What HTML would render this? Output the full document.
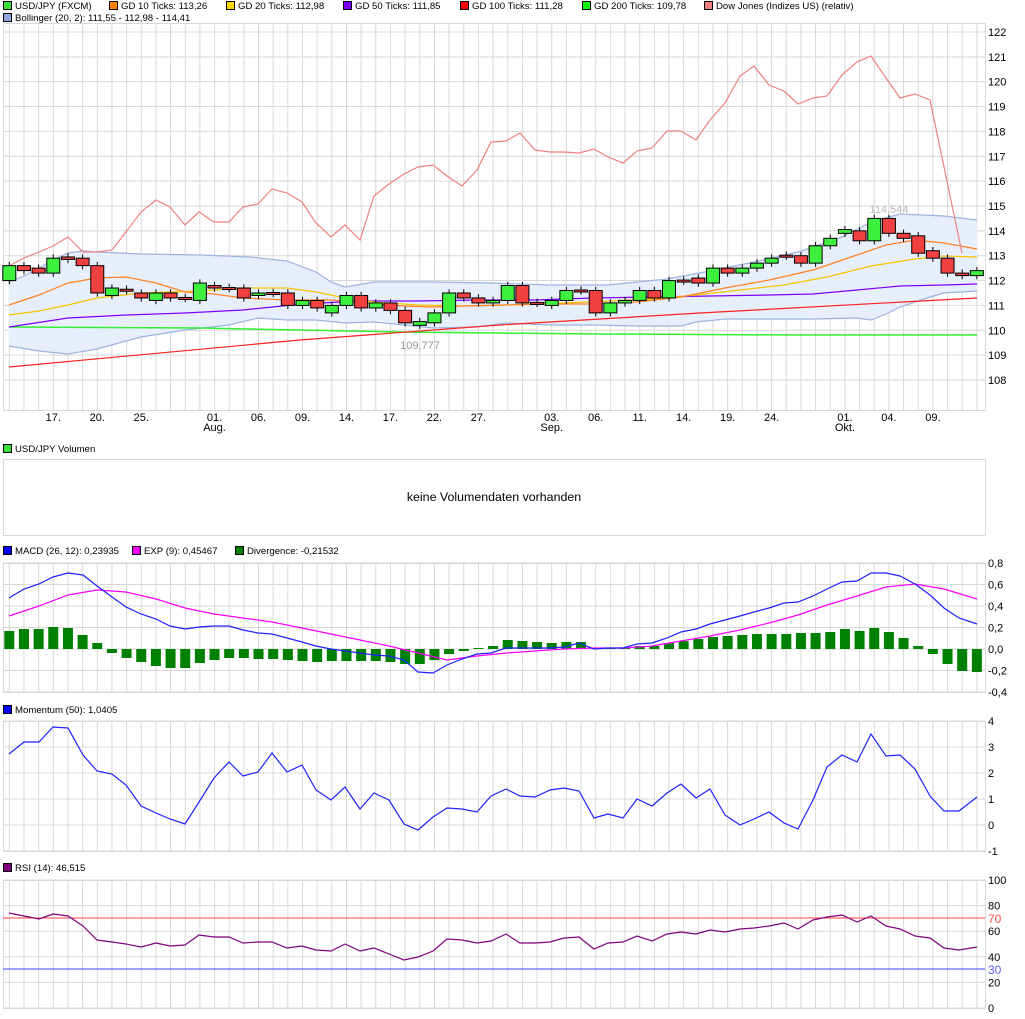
<!DOCTYPE html>
<html><head><meta charset="utf-8"><style>
body{margin:0;background:#fff;width:1025px;height:1019px;overflow:hidden;font-family:"Liberation Sans",sans-serif;}
svg{display:block}
text{font-family:"Liberation Sans",sans-serif;font-size:11px;fill:#000}
text.lg{font-size:9.6px}
</style></head><body>
<svg id="s" width="1025" height="1019" xmlns="http://www.w3.org/2000/svg"></svg>
<script>
const S=document.getElementById('s');let h='';
const X=i=>9.3+14.66*i;const L=3,R=985;
function grid(t,b){for(let i=0;i<67;i++)h+=`<line x1="${X(i)}" y1="${t}" x2="${X(i)}" y2="${b}" stroke="#d8d8d8"/>`;
h+=`<rect x="${L}.5" y="${t}.5" width="${R-L}" height="${b-t}" fill="none" stroke="#d8d8d8"/>`;}
function hl(y,lab,col){h+=`<line x1="${L}" y1="${y}" x2="${R}" y2="${y}" stroke="#d8d8d8"/>`;if(lab!==undefined)h+=`<text x="988" y="${y+4}" ${col?'style="fill:'+col+';font-size:12px"':''}>${lab}</text>`;}
function pl(pts,c,w){h+=`<polyline points="${pts.map(p=>p.join(',')).join(' ')}" fill="none" stroke="${c}" stroke-width="${w||1.2}"/>`;}
function leg(x,y,c,t){h+=`<rect x="${x}.5" y="${y-8}.5" width="8" height="8" fill="${c}" stroke="#000"/><text class="lg" x="${x+12}" y="${y}">${t}</text>`;}
leg(3,9,'#3be03b','USD/JPY (FXCM)');leg(109,9,'#ff7f00','GD 10 Ticks: 113,26');leg(226,9,'#ffd700','GD 20 Ticks: 112,98');leg(343,9,'#7f00ff','GD 50 Ticks: 111,85');leg(460,9,'#ff0000','GD 100 Ticks: 111,28');leg(582,9,'#00ff00','GD 200 Ticks: 109,78');leg(704,9,'#f08080','Dow Jones (Indizes US) (relativ)');
leg(3,21,'#8fa8d8','Bollinger (20, 2): 111,55 - 112,98 - 114,41');
const PY=p=>380-(p-108)*24.86;
grid(23,410);for(let p=108;p<=122;p++)hl(PY(p),p);
const dl=[[3,'17.'],[6,'20.'],[9,'25.'],[14,'01.','Aug.'],[17,'06.'],[20,'09.'],[23,'14.'],[26,'17.'],[29,'22.'],[32,'27.'],[37,'03.','Sep.'],[40,'06.'],[43,'11.'],[46,'14.'],[49,'19.'],[52,'24.'],[57,'01.','Okt.'],[60,'04.'],[63,'09.']];
dl.forEach(d=>{h+=`<text x="${X(d[0])}" y="421" text-anchor="middle">${d[1]}</text>`;if(d[2])h+=`<text x="${X(d[0])}" y="431" text-anchor="middle">${d[2]}</text>`;});
const bu=[[9,282],[24,276],[39,268],[53,260],[68,253],[83,251],[97,252],[141,254],[200,255],[250,257],[287,261],[316,272],[331,282],[345,287],[374,282],[433,282],[491,283],[550,285],[608,285],[667,279],[710,271],[754,262],[798,252],[842,237],[871,222],[900,214],[944,216],[977,220]];
const bl=[[9,346],[39,351],[68,354],[97,349],[141,337],[185,330],[229,325],[258,318],[287,320],[316,320],[345,323],[374,322],[404,325],[433,328],[477,327],[506,323],[550,325],[594,325],[637,326],[681,326],[696,322],[725,319],[769,319],[813,319],[857,318],[871,320],[886,314],[900,307],[930,297],[944,293],[977,291]];
h+=`<polygon points="${bu.concat(bl.slice().reverse()).map(p=>p.join(',')).join(' ')}" fill="#e8effc"/>`;
pl(bu,'#9db3e0');pl(bl,'#9db3e0');
pl([[9,327],[200,328],[400,332],[600,334],[800,335],[977,335]],'#33ee33',1.5);
pl([[9,367],[300,340],[500,325],[700,313],[977,298]],'#ff2020');
pl([[9,327],[68,318],[126,315],[185,313],[243,310],[302,304],[360,301],[418,301],[477,300],[535,300],[594,298],[652,297],[710,296],[769,295],[813,294],[857,290],[900,286],[944,285],[977,284]],'#7f00ff');
pl([[9,315],[39,311],[68,305],[97,298],[141,293],[200,291],[243,288],[287,288],[316,292],[345,298],[374,302],[418,305],[462,306],[506,305],[564,303],[608,301],[652,299],[696,295],[740,290],[784,285],[827,277],[871,266],[915,259],[944,256],[977,257]],'#f5c400');
pl([[9,305],[39,295],[68,283],[97,278],[126,277],[156,283],[185,292],[214,294],[243,298],[287,300],[331,300],[374,304],[404,306],[433,307],[462,306],[506,305],[550,304],[594,304],[637,302],[681,297],[725,288],[769,280],[813,270],[857,255],[886,245],[915,240],[944,243],[977,249]],'#ff8020');
pl([[9,266],[24,258],[39,252],[53,246],[68,237],[83,252],[97,252],[112,250],[126,232],[141,212],[156,200],[170,207],[185,225],[199,212],[214,222],[229,222],[243,207],[258,204],[272,189],[287,193],[302,202],[316,223],[331,237],[345,225],[360,240],[374,196],[389,184],[404,174],[418,167],[433,165],[447,176],[462,186],[477,170],[491,142],[506,141],[520,133],[535,150],[550,152],[564,152],[579,153],[594,149],[608,157],[623,163],[637,151],[652,148],[667,131],[681,131],[696,140],[710,120],[725,103],[740,76],[754,66],[769,85],[784,91],[798,104],[813,98],[827,96],[842,75],[857,62],[871,56],[886,78],[900,98],[915,94],[930,100],[962,253]],'#f08080');
const c=[[112,112.6],[112.6,112.4],[112.5,112.3],[112.3,112.9],[112.95,112.85],[112.9,112.6],[112.6,111.5],[111.4,111.7],[111.65,111.6],[111.5,111.3],[111.2,111.5],[111.5,111.3],[111.32,111.28],[111.2,111.9],[111.8,111.7],[111.72,111.68],[111.7,111.3],[111.4,111.5],[111.52,111.48],[111.5,111.0],[111.0,111.2],[111.2,110.9],[110.7,111.0],[111.0,111.4],[111.4,110.9],[110.9,111.1],[111.1,110.8],[110.8,110.3],[110.2,110.35],[110.3,110.7],[110.7,111.5],[111.5,111.3],[111.3,111.1],[111.1,111.2],[111.2,111.8],[111.8,111.1],[111.12,111.08],[111.0,111.2],[111.2,111.6],[111.62,111.58],[111.6,110.7],[110.7,111.1],[111.1,111.2],[111.2,111.6],[111.6,111.3],[111.3,112.0],[112.02,111.98],[112.1,111.9],[111.9,112.5],[112.5,112.3],[112.3,112.5],[112.5,112.7],[112.7,112.9],[113.02,112.98],[113.0,112.7],[112.7,113.4],[113.4,113.7],[113.9,114.05],[114.0,113.6],[113.6,114.5],[114.5,113.9],[113.9,113.7],[113.8,113.1],[113.2,112.9],[112.9,112.3],[112.3,112.2],[112.2,112.4]];
c.forEach((d,i)=>{const x=X(i),o=d[0],cl=d[1],hi=Math.max(o,cl)+0.15,lo=Math.min(o,cl)-0.15;
h+=`<line x1="${x}" y1="${PY(hi)}" x2="${x}" y2="${PY(lo)}" stroke="#000"/>`;
const t=PY(Math.max(o,cl)),b=PY(Math.min(o,cl));const ht=Math.max(b-t,2);
h+=`<rect x="${x-6.5}" y="${t}" width="13" height="${ht}" fill="${cl>=o?'#3ef03e':'#f04040'}" stroke="#000"/>`;});
h+=`<text x="420" y="349" text-anchor="middle" style="fill:#999">109,777</text><text x="889" y="213" text-anchor="middle" style="fill:#bbb">114,544</text>`;
leg(3,452,'#3be03b','USD/JPY Volumen');
h+=`<rect x="${L}.5" y="459.5" width="${R-L}" height="76" fill="none" stroke="#d8d8d8"/><text x="494" y="501" text-anchor="middle" style="font-size:12.4px">keine Volumendaten vorhanden</text>`;
leg(3,554,'#0000ff','MACD (26, 12): 0,23935');leg(132,554,'#ff00ff','EXP (9): 0,45467');leg(235,554,'#007f00','Divergence: -0,21532');
grid(563,692);const mv=['0,8','0,6','0,4','0,2','0,0','-0,2','-0,4'];mv.forEach((v,k)=>hl(563+k*21.5,v));
const dv=[18,20,20,22,21,14,6,-4,-9,-13,-17,-19,-19,-14,-11,-9,-9,-10,-10,-11,-12,-13,-12,-12,-12,-12,-13,-15,-15,-11,-5,-2,1,3,9,8,7,6,7,7,1,1,1,3,3,6,8,10,12,13,14,15,15,15,16,16,17,20,18,21,17,11,3,-5,-15,-22,-23];
dv.forEach((v,i)=>{h+=`<rect x="${X(i)-5}" y="${v>0?649-v:649}" width="10" height="${Math.abs(v)}" fill="#008000"/>`;});
pl([[9,616],[39,606],[68,595],[97,590],[126,592],[156,599],[185,608],[214,614],[243,618],[272,622],[302,628],[331,634],[360,640],[389,646],[418,653],[447,660],[477,656],[506,653],[535,651],[564,649],[594,648],[623,648],[652,646],[681,641],[710,636],[740,630],[769,623],[798,615],[827,605],[857,596],[886,587],[915,584],[944,589],[977,599]],'#ff00ff');
pl([[9,598],[24,589],[39,584],[53,577],[68,573],[83,575],[97,586],[112,597],[126,607],[141,614],[156,619],[170,626],[185,629],[199,627],[214,626],[229,626],[243,630],[258,633],[272,634],[287,638],[302,642],[316,646],[331,649],[345,651],[360,653],[374,655],[389,656],[404,660],[418,672],[433,673],[447,665],[462,659],[477,654],[491,653],[506,648],[520,648],[535,648],[550,648],[564,647],[579,643],[594,649],[608,648],[623,648],[637,644],[652,643],[667,638],[681,632],[696,629],[710,624],[725,620],[740,616],[754,612],[769,608],[784,603],[798,602],[813,596],[827,589],[842,582],[857,581],[871,573],[886,573],[900,576],[915,584],[930,595],[944,608],[959,618],[977,624]],'#2020ff');
leg(3,713,'#0000ff','Momentum (50): 1,0405');
grid(721,851);[4,3,2,1,0,-1].forEach((v,k)=>hl(721+k*26,v));
pl([[9,754],[24,742],[39,742],[53,727],[68,728],[83,755],[97,771],[112,774],[126,785],[141,806],[156,813],[170,819],[185,824],[199,802],[214,778],[229,762],[243,776],[258,772],[272,753],[287,772],[302,765],[316,790],[331,800],[345,787],[360,809],[374,793],[389,800],[404,824],[418,830],[433,817],[447,808],[462,809],[477,812],[491,796],[506,789],[520,796],[535,797],[550,790],[564,788],[579,791],[594,818],[608,814],[623,818],[637,799],[652,806],[667,793],[681,784],[696,798],[710,789],[725,815],[740,825],[754,819],[769,812],[784,823],[798,829],[813,800],[827,767],[842,755],[857,762],[871,734],[886,756],[900,755],[915,769],[930,796],[944,811],[959,811],[977,797]],'#2020ff');
leg(3,871,'#800080','RSI (14): 46,515');
grid(880,1008);[100,80,60,40,20,0].forEach((v,k)=>hl(880+k*25.6,v));
h+=`<line x1="${L}" y1="918" x2="${R}" y2="918" stroke="#ff4040"/><line x1="${L}" y1="969" x2="${R}" y2="969" stroke="#4040ff"/>`;
h+=`<text x="988" y="923" style="fill:#ff5050;font-size:12px">70</text><text x="988" y="974" style="fill:#6060ff;font-size:12px">30</text>`;
pl([[9,913],[24,916],[39,919],[53,914],[68,916],[83,926],[97,940],[112,942],[126,944],[141,947],[156,943],[170,946],[185,945],[199,935],[214,937],[229,937],[243,943],[258,942],[272,942],[287,948],[302,946],[316,950],[331,951],[345,944],[360,951],[374,948],[389,954],[404,960],[418,957],[433,951],[447,939],[462,940],[477,943],[491,941],[506,934],[520,943],[535,943],[550,942],[564,938],[579,937],[594,949],[608,943],[623,942],[637,936],[652,941],[667,934],[681,932],[696,934],[710,930],[725,932],[740,929],[754,928],[769,926],[784,923],[798,929],[813,920],[827,917],[842,915],[857,922],[871,916],[886,926],[900,929],[915,936],[930,938],[944,948],[959,950],[977,947]],'#800080');
S.innerHTML=h;
</script>
</body></html>
